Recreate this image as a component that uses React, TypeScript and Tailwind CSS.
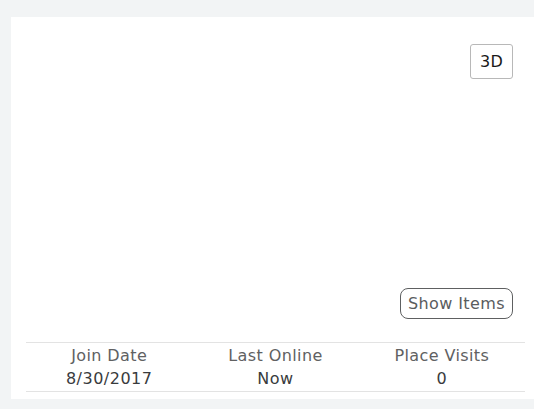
import React from 'react';

type Stat = {
  label: string;
  value: string;
};

const stats: Stat[] = [
  { label: 'Join Date', value: '8/30/2017' },
  { label: 'Last Online', value: 'Now' },
  { label: 'Place Visits', value: '0' },
];

const App = () => {
  return (
    <div className="h-[409px] w-[534px] overflow-hidden bg-[#f2f4f5] pt-[17px] pl-[11px] font-['DejaVu_Sans',sans-serif]">
      <div className="h-[382px] bg-white pl-[15px] pr-[9px]">
        {/* avatar canvas */}
        <div className="flex h-[325px] flex-col items-end pr-[12px] pt-[27px] pb-[23px]">
          <button className="h-[35px] w-[43px] rounded-[3px] border border-[#b8b8b8] bg-white text-[16px] tracking-[0.3px] text-[#191919]">
            3D
          </button>
          <div className="flex-1" />
          <button className="h-[31px] w-[113px] rounded-[8px] border border-[#5e6061] bg-white text-[16px] tracking-[0.4px] text-[#5a5c5e]">
            Show Items
          </button>
        </div>

        <ul className="grid h-[50px] grid-cols-3 border-y border-[#e3e3e3]">
          {stats.map((s) => (
            <li key={s.label} className="flex flex-col items-center pt-[1px]">
              <span className="text-[16px] leading-[23px] tracking-[0.4px] text-[#606162]">{s.label}</span>
              <span className="text-[16px] leading-[24px] tracking-[0.5px] text-[#393b3d]">{s.value}</span>
            </li>
          ))}
        </ul>
      </div>
    </div>
  );
};

export default App;
